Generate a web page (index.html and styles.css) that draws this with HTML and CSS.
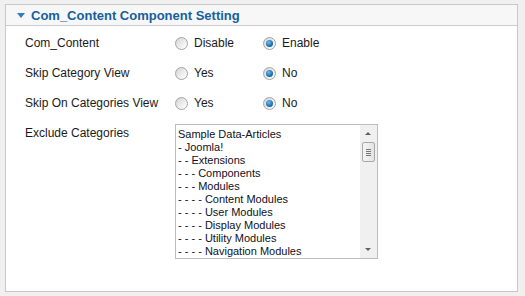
FILE: index.html
```html
<!DOCTYPE html>
<html lang="en">
<head>
    <meta charset="UTF-8" />
    <title>Com_Content Component Setting</title>
    <link rel="stylesheet" href="styles.css">
</head>
<body>
    <div class="panel">
        <!-- Panel header -->
        <div class="panel-header">
            <span class="toggle"></span>
            <h3>Com_Content Component Setting</h3>
        </div>

        <div class="settings">
            <div class="row">
                <div class="label">Com_Content</div>
                <label class="option"><span class="radio"></span>Disable</label>
                <label class="option"><span class="radio checked"></span>Enable</label>
            </div>
            <div class="row">
                <div class="label">Skip Category View</div>
                <label class="option"><span class="radio"></span>Yes</label>
                <label class="option"><span class="radio checked"></span>No</label>
            </div>
            <div class="row">
                <div class="label">Skip On Categories View</div>
                <label class="option"><span class="radio"></span>Yes</label>
                <label class="option"><span class="radio checked"></span>No</label>
            </div>
            <div class="row row-list">
                <div class="label">Exclude Categories</div>
                <!-- Multi select list with a classic scrollbar -->
                <div class="listbox">
                    <ul class="items">
                        <li>Sample Data-Articles</li>
                        <li>- Joomla!</li>
                        <li>- - Extensions</li>
                        <li>- - - Components</li>
                        <li>- - - Modules</li>
                        <li>- - - - Content Modules</li>
                        <li>- - - - User Modules</li>
                        <li>- - - - Display Modules</li>
                        <li>- - - - Utility Modules</li>
                        <li>- - - - Navigation Modules</li>
                    </ul>
                    <div class="scrollbar">
                        <span class="arrow up"></span>
                        <span class="thumb"><i></i><i></i><i></i><i></i></span>
                        <span class="track"></span>
                        <span class="arrow down"></span>
                    </div>
                </div>
            </div>
        </div>
    </div>
</body>
</html>
```

FILE: styles.css
```css
body, html {
    margin: 0;
    padding: 0;
}

body {
    background-color: #f0f0f0;
    padding: 4px 0 0 5px;
    font-family: 'Liberation Sans', Arial, sans-serif;
    color: #1a1a1a;
}

.panel {
    width: 511px;
    height: 286px;
    background-color: #fff;
    border: 1px solid #c8c8c8;
}

.panel-header {
    height: 20px;
    background-color: #f7f7f7;
    border-bottom: 1px solid #cccccc;
    display: flex;
    align-items: center;
    padding-left: 11px;
}

/* Small down-pointing triangle */
.toggle {
    width: 0;
    height: 0;
    border-left: 4px solid transparent;
    border-right: 4px solid transparent;
    border-top: 5px solid #2b7fc0;
    margin-right: 6px;
    margin-top: 1px;
}

.panel-header h3 {
    margin: 0;
    font-size: 13px;
    font-weight: bold;
    color: #17609c;
}

.settings {
    padding-top: 2px;
    padding-left: 19px;
}

.row {
    display: flex;
    align-items: center;
    height: 30px;
    font-size: 12px;
}

.row .label {
    width: 150px;
}

.option {
    width: 88px;
    display: flex;
    align-items: center;
}

/* Radio buttons */
.radio {
    width: 11px;
    height: 11px;
    border: 1px solid #a3a3a3;
    border-radius: 50%;
    background: linear-gradient(135deg, #d4d4d4, #f4f4f4 70%, #ffffff);
    margin-right: 6px;
    position: relative;
}

.radio.checked::after {
    content: '';
    position: absolute;
    left: 2px;
    top: 2px;
    width: 7px;
    height: 7px;
    border-radius: 50%;
    background: radial-gradient(circle at 40% 35%, #6fc0ef, #1a6fae 60%, #0e4f86);
}

.row-list {
    align-items: flex-start;
    height: auto;
    padding-top: 6px;
}

.row-list .label {
    line-height: 14px;
    padding-top: 2px;
}

.listbox {
    width: 201px;
    height: 133px;
    border: 1px solid #bdbdbd;
    display: flex;
    background-color: #fff;
}

.items {
    list-style: none;
    margin: 0;
    padding: 3px 0 0 2px;
    flex-grow: 1;
    overflow: hidden;
    font-size: 11px;
    line-height: 13px;
    color: #101020;
}

.items li {
    white-space: nowrap;
}

/* Classic scrollbar */
.scrollbar {
    width: 17px;
    background-color: #f0f0f0;
    display: flex;
    flex-direction: column;
    align-items: center;
}

.arrow {
    height: 17px;
    width: 17px;
    position: relative;
}

.arrow::after {
    content: '';
    position: absolute;
    left: 5px;
    width: 0;
    height: 0;
    border-left: 3px solid transparent;
    border-right: 3px solid transparent;
}

.arrow.up::after {
    top: 7px;
    border-bottom: 3px solid #606060;
}

.arrow.down::after {
    top: 7px;
    border-top: 3px solid #606060;
}

.thumb {
    width: 13px;
    height: 20px;
    border: 1px solid #a8a8a8;
    border-radius: 2px;
    box-sizing: border-box;
    background: linear-gradient(to right, #f4f4f4, #e4e4e4);
    display: flex;
    flex-direction: column;
    align-items: center;
    justify-content: center;
    gap: 1px;
}

.thumb i {
    display: block;
    width: 5px;
    height: 1px;
    background-color: #777;
}

.track {
    flex-grow: 1;
}
```
